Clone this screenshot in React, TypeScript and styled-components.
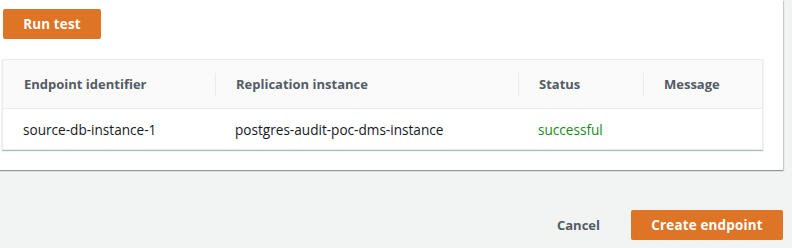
import styled, { createGlobalStyle } from "styled-components";

const GlobalStyle = createGlobalStyle`
  html, body {
    margin: 0;
    padding: 0;
    background: #f2f3f3;
    font-family: "Open Sans", "Liberation Sans", sans-serif;
    overflow: hidden;
  }
`;

const Page = styled.div`
  width: 792px;
  height: 248px;
  display: flex;
  flex-direction: column;
`;

const Panel = styled.section`
  box-sizing: border-box;
  width: 800px;
  margin-left: -17px;
  padding: 9px 20px 20px 20px;
  background: #ffffff;
  box-shadow: 0 1px 1px 0 rgba(0, 28, 36, 0.3), 1px 1px 1px 0 rgba(0, 28, 36, 0.15);
  display: flex;
  flex-direction: column;
  align-items: flex-start;
  gap: 20px;
`;

const PrimaryButton = styled.button<{ $width: number }>`
  box-sizing: border-box;
  width: ${(p) => p.$width}px;
  height: 30px;
  padding: 0;
  border: none;
  border-radius: 2px;
  background: #dd7426;
  color: #ffffff;
  font-family: inherit;
  font-size: 13.4px;
  font-weight: 700;
  letter-spacing: 0.2px;
  cursor: pointer;
`;

const Table = styled.div`
  box-sizing: border-box;
  width: 761px;
  margin-left: -1px;
  border: 1px solid #eaeded;
  box-shadow: 0 1px 1px 0 rgba(0, 28, 36, 0.3);
  background: #ffffff;
`;

const Row = styled.div<{ $header?: boolean }>`
  display: grid;
  grid-template-columns: 212px 303px 125px 1fr;
  align-items: center;
  height: ${(p) => (p.$header ? 48 : 40)}px;
  background: ${(p) => (p.$header ? "#fafafa" : "#ffffff")};
  border-bottom: ${(p) => (p.$header ? "1px solid #eaeded" : "none")};
`;

const HeadCell = styled.div<{ $divider?: boolean }>`
  padding-left: ${(p) => (p.$divider ? 20 : 21)}px;
  height: 23px;
  line-height: 23px;
  border-left: ${(p) => (p.$divider ? "1px solid #eaeded" : "none")};
  color: #545b64;
  font-size: 13px;
  font-weight: 700;
  white-space: nowrap;
`;

const Cell = styled.div<{ $tone?: "success" }>`
  padding-left: 20px;
  color: ${(p) => (p.$tone === "success" ? "#218a21" : "#16191f")};
  font-size: 13.6px;
  white-space: nowrap;
`;

const Footer = styled.div`
  display: flex;
  justify-content: flex-end;
  align-items: center;
  gap: 31px;
  padding: 40px 9px 0 0;
`;

const LinkButton = styled.button`
  padding: 0;
  border: none;
  background: none;
  color: #545b64;
  font-family: inherit;
  font-size: 13px;
  font-weight: 700;
  cursor: pointer;
`;

const columns = ["Endpoint identifier", "Replication instance", "Status", "Message"];

export default function App() {
  return (
    <Page>
      <GlobalStyle />
      <Panel>
        <PrimaryButton $width={98}>Run test</PrimaryButton>
        <Table>
          <Row $header>
            {columns.map((c, i) => (
              <HeadCell key={c} $divider={i > 0}>
                {c}
              </HeadCell>
            ))}
          </Row>
          <Row>
            <Cell>source-db-instance-1</Cell>
            <Cell>postgres-audit-poc-dms-instance</Cell>
            <Cell $tone="success">successful</Cell>
            <Cell />
          </Row>
        </Table>
      </Panel>
      <Footer>
        <LinkButton>Cancel</LinkButton>
        <PrimaryButton $width={152}>Create endpoint</PrimaryButton>
      </Footer>
    </Page>
  );
}
